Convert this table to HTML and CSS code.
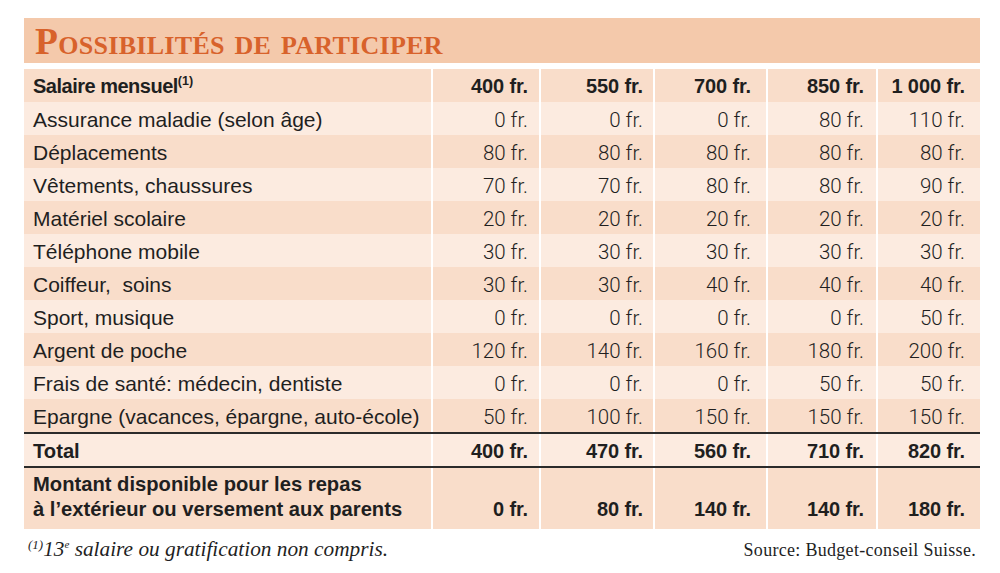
FILE: index.html
```html
<!DOCTYPE html>
<html lang="fr">
<head>
<meta charset="utf-8">
<title>Possibilités de participer</title>
<link rel="stylesheet" href="styles.css">
</head>
<body>
<div class="page">
  <div class="title-bar"><h1 class="title">Possibilités de participer</h1></div>
  <div class="table">
    <div class="row dark head">
      <div class="cell label"><span>Salaire mensuel<sup class="sup">(1)</sup></span></div>
      <div class="cell num">400 fr.</div><div class="cell num">550 fr.</div><div class="cell num">700 fr.</div><div class="cell num">850 fr.</div><div class="cell num">1 000 fr.</div>
    </div>
    <div class="row light">
      <div class="cell label">Assurance maladie (selon âge)</div>
      <div class="cell num">0 fr.</div><div class="cell num">0 fr.</div><div class="cell num">0 fr.</div><div class="cell num">80 fr.</div><div class="cell num">110 fr.</div>
    </div>
    <div class="row dark">
      <div class="cell label">Déplacements</div>
      <div class="cell num">80 fr.</div><div class="cell num">80 fr.</div><div class="cell num">80 fr.</div><div class="cell num">80 fr.</div><div class="cell num">80 fr.</div>
    </div>
    <div class="row light">
      <div class="cell label">Vêtements, chaussures</div>
      <div class="cell num">70 fr.</div><div class="cell num">70 fr.</div><div class="cell num">80 fr.</div><div class="cell num">80 fr.</div><div class="cell num">90 fr.</div>
    </div>
    <div class="row dark">
      <div class="cell label">Matériel scolaire</div>
      <div class="cell num">20 fr.</div><div class="cell num">20 fr.</div><div class="cell num">20 fr.</div><div class="cell num">20 fr.</div><div class="cell num">20 fr.</div>
    </div>
    <div class="row light">
      <div class="cell label">Téléphone mobile</div>
      <div class="cell num">30 fr.</div><div class="cell num">30 fr.</div><div class="cell num">30 fr.</div><div class="cell num">30 fr.</div><div class="cell num">30 fr.</div>
    </div>
    <div class="row dark">
      <div class="cell label">Coiffeur,&nbsp; soins</div>
      <div class="cell num">30 fr.</div><div class="cell num">30 fr.</div><div class="cell num">40 fr.</div><div class="cell num">40 fr.</div><div class="cell num">40 fr.</div>
    </div>
    <div class="row light">
      <div class="cell label">Sport, musique</div>
      <div class="cell num">0 fr.</div><div class="cell num">0 fr.</div><div class="cell num">0 fr.</div><div class="cell num">0 fr.</div><div class="cell num">50 fr.</div>
    </div>
    <div class="row dark">
      <div class="cell label">Argent de poche</div>
      <div class="cell num">120 fr.</div><div class="cell num">140 fr.</div><div class="cell num">160 fr.</div><div class="cell num">180 fr.</div><div class="cell num">200 fr.</div>
    </div>
    <div class="row light">
      <div class="cell label">Frais de santé: médecin, dentiste</div>
      <div class="cell num">0 fr.</div><div class="cell num">0 fr.</div><div class="cell num">0 fr.</div><div class="cell num">50 fr.</div><div class="cell num">50 fr.</div>
    </div>
    <div class="row dark">
      <div class="cell label">Epargne (vacances, épargne, auto-école)</div>
      <div class="cell num">50 fr.</div><div class="cell num">100 fr.</div><div class="cell num">150 fr.</div><div class="cell num">150 fr.</div><div class="cell num">150 fr.</div>
    </div>
    <div class="row light total">
      <div class="cell label">Total</div>
      <div class="cell num">400 fr.</div><div class="cell num">470 fr.</div><div class="cell num">560 fr.</div><div class="cell num">710 fr.</div><div class="cell num">820 fr.</div>
    </div>
    <div class="row dark total tall">
      <div class="cell label"><span>Montant disponible pour les repas<br>à l’extérieur ou versement aux parents</span></div>
      <div class="cell num">0 fr.</div><div class="cell num">80 fr.</div><div class="cell num">140 fr.</div><div class="cell num">140 fr.</div><div class="cell num">180 fr.</div>
    </div>
  </div>
  <div class="notes">
    <p class="footnote"><sup class="fsup">(1)</sup>13<sup class="fsup-e">e</sup> salaire ou gratification non compris.</p>
    <p class="source">Source: Budget-conseil Suisse.</p>
  </div>
</div>
</body>
</html>
```

FILE: styles.css
```css
html, body {
  margin: 0;
  padding: 0;
  background: #ffffff;
}

.page {
  width: 956px;
  padding: 18px 0 0 24px;
}

.title-bar {
  background: #f4c9ab;
  height: 45px;
  display: flex;
  align-items: center;
  padding-left: 11px;
  margin-bottom: 6px;
}

.title {
  margin: 0;
  font-family: "Liberation Serif", "DejaVu Serif", serif;
  font-weight: bold;
  font-variant: small-caps;
  font-size: 37.5px;
  line-height: 1;
  color: #d8622b;
  letter-spacing: 0.3px;
  padding-top: 3px;
}

.table {
  display: flex;
  flex-direction: column;
}

.row {
  display: grid;
  grid-template-columns: 407px 106px 112px 111px 108px 102px;
  column-gap: 2px;
  height: 33px;
  background: #ffffff;
  font-family: "Liberation Sans", Arial, sans-serif;
  font-size: 21px;
  color: #1f1f1f;
}

.row.dark .cell { background: #f9ddca; }
.row.light .cell { background: #fcebe0; }

.cell {
  display: flex;
  align-items: center;
  padding-top: 2px;
}

.label {
  padding-left: 9px;
}

.num {
  justify-content: flex-end;
  padding-right: 11px;
  font-family: "Roboto", "Liberation Sans", sans-serif;
  font-weight: 300;
  font-size: 20.5px;
}

.num:nth-child(3) { padding-right: 10px; }
.num:nth-child(4) { padding-right: 15px; }
.num:nth-child(5) { padding-right: 12px; }
.num:nth-child(6) { padding-right: 15px; }

.head .cell, .total .cell {
  font-weight: bold;
  font-size: 20.2px;
}

.head .num, .total .num {
  font-family: "Liberation Sans", Arial, sans-serif;
  font-weight: bold;
  font-size: 20px;
  letter-spacing: -0.1px;
}

.head .label {
  font-size: 20px;
  letter-spacing: -0.5px;
}

.sup {
  font-size: 12.5px;
  vertical-align: 8px;
  line-height: 0;
  letter-spacing: 0;
}

.total {
  border-top: 2px solid #2b2b2b;
  height: 32px;
}

.tall {
  height: 61px;
}

.tall .cell {
  align-items: flex-end;
  padding-bottom: 7px;
  line-height: 25px;
}

.notes {
  display: flex;
  justify-content: space-between;
  align-items: baseline;
  padding: 8px 4px 0 4px;
}

.notes p {
  margin: 0;
}

.footnote {
  font-family: "Liberation Serif", "DejaVu Serif", serif;
  font-style: italic;
  font-size: 21.3px;
  color: #1f1f1f;
}

.fsup {
  font-size: 13px;
  vertical-align: 7px;
  line-height: 0;
}

.fsup-e {
  font-size: 11px;
  vertical-align: 8px;
  line-height: 0;
}

.source {
  font-family: "Liberation Serif", "DejaVu Serif", serif;
  font-size: 18px;
  color: #1f1f1f;
  letter-spacing: 0.3px;
}
```
